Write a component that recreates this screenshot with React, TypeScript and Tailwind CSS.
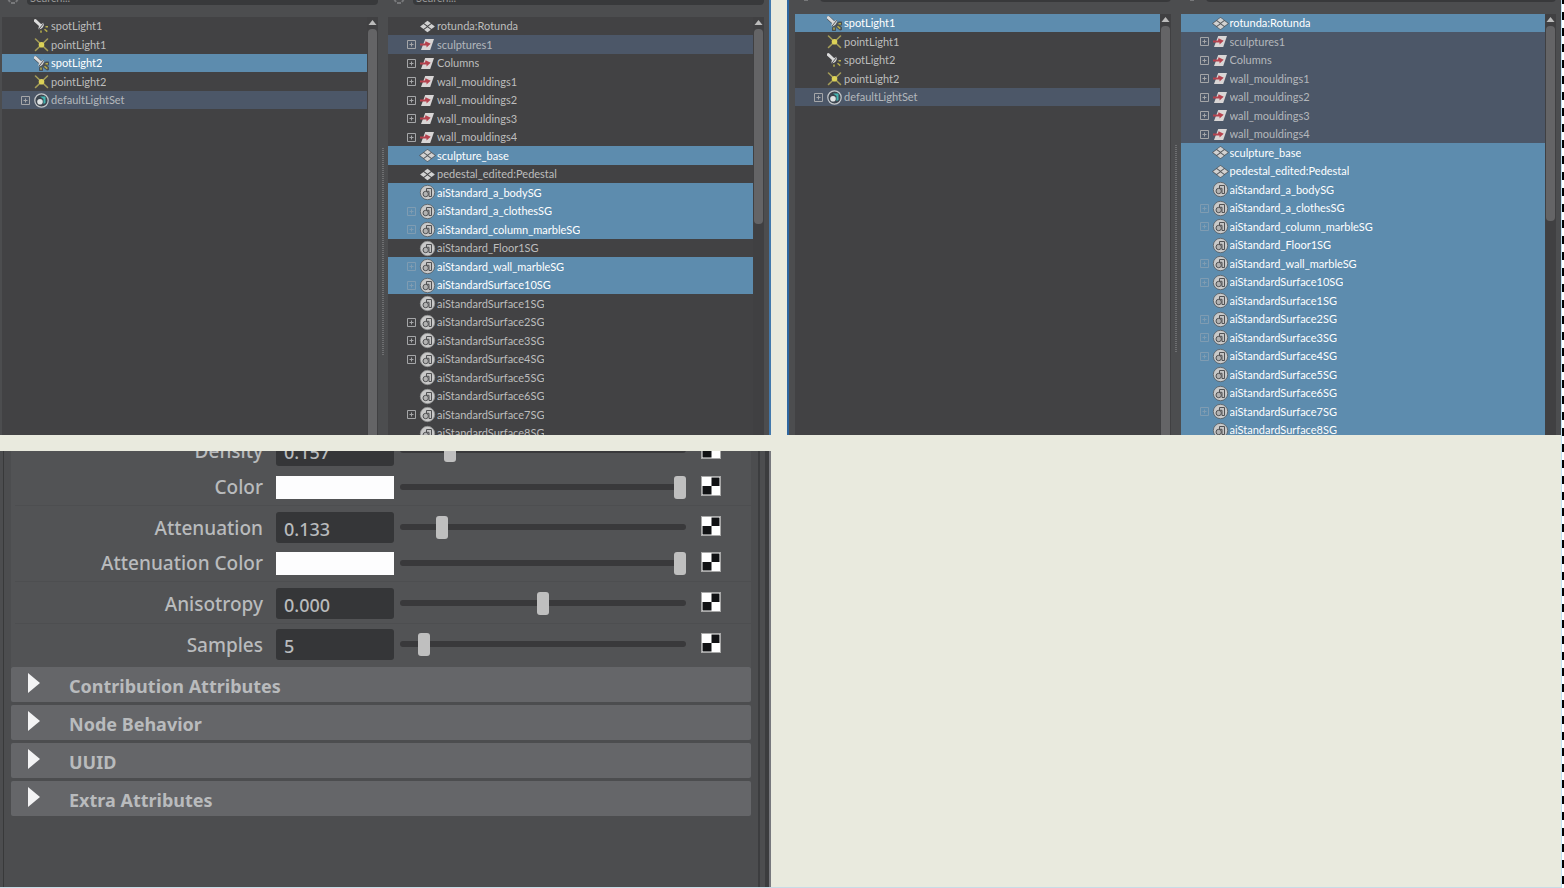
import { useState } from "react";
import clsx from "clsx";

type Kind = "spot" | "point" | "lightSet" | "mesh" | "group" | "shading";
type Mark = "none" | "selected" | "related";

type TreeItem = {
  name: string;
  kind: Kind;
  expandable?: boolean;
};

const LIGHTS: TreeItem[] = [
  { name: "spotLight1", kind: "spot" },
  { name: "pointLight1", kind: "point" },
  { name: "spotLight2", kind: "spot" },
  { name: "pointLight2", kind: "point" },
  { name: "defaultLightSet", kind: "lightSet", expandable: true },
];

const OBJECTS: TreeItem[] = [
  { name: "rotunda:Rotunda", kind: "mesh" },
  { name: "sculptures1", kind: "group", expandable: true },
  { name: "Columns", kind: "group", expandable: true },
  { name: "wall_mouldings1", kind: "group", expandable: true },
  { name: "wall_mouldings2", kind: "group", expandable: true },
  { name: "wall_mouldings3", kind: "group", expandable: true },
  { name: "wall_mouldings4", kind: "group", expandable: true },
  { name: "sculpture_base", kind: "mesh" },
  { name: "pedestal_edited:Pedestal", kind: "mesh" },
  { name: "aiStandard_a_bodySG", kind: "shading" },
  { name: "aiStandard_a_clothesSG", kind: "shading", expandable: true },
  { name: "aiStandard_column_marbleSG", kind: "shading", expandable: true },
  { name: "aiStandard_Floor1SG", kind: "shading" },
  { name: "aiStandard_wall_marbleSG", kind: "shading", expandable: true },
  { name: "aiStandardSurface10SG", kind: "shading", expandable: true },
  { name: "aiStandardSurface1SG", kind: "shading" },
  { name: "aiStandardSurface2SG", kind: "shading", expandable: true },
  { name: "aiStandardSurface3SG", kind: "shading", expandable: true },
  { name: "aiStandardSurface4SG", kind: "shading", expandable: true },
  { name: "aiStandardSurface5SG", kind: "shading" },
  { name: "aiStandardSurface6SG", kind: "shading" },
  { name: "aiStandardSurface7SG", kind: "shading", expandable: true },
  { name: "aiStandardSurface8SG", kind: "shading" },
];

const GROUPS = OBJECTS.filter((o) => o.kind === "group").map((o) => o.name);
const NOT_GROUPS = OBJECTS.filter((o) => o.kind !== "group").map((o) => o.name);

function NodeIcon({ kind, selected }: { kind: Kind; selected: boolean }) {
  const outline = selected ? "#4b5054" : "none";

  if (kind === "spot") {
    return (
      <svg viewBox="0 0 15 15" className="size-[15px] shrink-0">
        <g stroke={outline} strokeWidth="4" strokeLinecap="round" fill="none">
          <path d="M1.5 2 6 6M8.5 8.5h1M12 7.5h2M11 10.5l2.5 2M7 12v2" />
        </g>
        <path d="M1.3 1.6 6 6" stroke="#dcdcdc" strokeWidth="3" strokeLinecap="round" />
        <path d="M9.8 3.8a5 5 0 0 1-5.2 6.4c-.4-2 .3-3.5 1.6-4.8z" fill="#d6d6d6" />
        <path d="M9.8 4.2 5 10.2" stroke="#55565a" strokeWidth="1" />
        <path d="M11.5 7.7H14M10.5 10.2l2.8 2.4M7 11.5v2.2" stroke="#b5ad4c" strokeWidth="1.5" />
      </svg>
    );
  }

  if (kind === "point") {
    return (
      <svg viewBox="0 0 15 15" className="size-[15px] shrink-0">
        <path d="M1.5 2l12 11.5M13.5 2l-12 11.5" stroke="#a59d58" strokeWidth="1.6" strokeLinecap="round" />
        <circle cx="7.5" cy="7.7" r="2.8" fill="#dcd257" />
      </svg>
    );
  }

  if (kind === "lightSet") {
    return (
      <svg viewBox="0 0 15 15" className="size-[15px] shrink-0">
        <circle cx="7.5" cy="7.5" r="6.7" fill="#3d4650" stroke="#c6c9cc" strokeWidth="1.2" />
        <path d="M6 3.5h5.500v6.500l-2 1V6z" fill="#42b3b0" />
        <circle cx="6" cy="8.8" r="2.8" fill="#dfe3e4" />
      </svg>
    );
  }

  if (kind === "mesh") {
    return (
      <svg viewBox="0 0 15 15" className="size-[15px] shrink-0 overflow-visible">
        <path d="M7.5 1 16 7.500l-8.500 6.500L-1 7.500z" fill={selected ? "#55595d" : "none"} />
        <g fill="#d2d2d2">
          <path d="m7.5 1.8 3.400 2.500-3.400 2.500-3.400-2.500z" />
          <path d="m3.500 5 3.400 2.500-3.400 2.500L.1 7.500z" />
          <path d="m11.500 5 3.400 2.500-3.400 2.500-3.400-2.500z" />
          <path d="m7.500 8.200 3.400 2.500-3.400 2.500-3.400-2.500z" />
        </g>
      </svg>
    );
  }

  if (kind === "group") {
    return (
      <svg viewBox="0 0 15 15" className="size-[15px] shrink-0">
        <path d="M5.2 2h8.800l-3.800 11H1z" fill="#d9d6d6" />
        <path d="M0 6.500h5L5.500 4.200l5.200 2.600-4.200 3.600V8.600H0z" fill="#b5424e" />
      </svg>
    );
  }

  return (
    <svg viewBox="0 0 15 15" className="size-[15px] shrink-0 overflow-visible">
      <circle cx="7.5" cy="7.5" r="7.200" fill="#c9c9c9" stroke={selected ? "#55595d" : "#8f9090"} strokeWidth=".8" />
      <path d="M6.500 3.500h5v8H9V6.300H6.500z" fill="#c4c4c4" stroke="#505153" strokeWidth="1" />
      <circle cx="5.700" cy="9" r="2.700" fill="#b2b2b2" stroke="#505153" strokeWidth="1" />
    </svg>
  );
}

function TreeRow({ item, mark, onSelect }: { item: TreeItem; mark: Mark; onSelect: () => void }) {
  return (
    <li
      className={clsx(
        "flex items-center pl-[19px] odd:h-[18px] even:h-[19px]",
        mark === "selected" && "bg-[#5d8cae] text-white",
        mark === "related" && "bg-[#4c5768] text-[#b4b7bc]",
        mark === "none" && "text-[#bdbdbd]",
      )}
    >
      <span className="mr-1 flex w-[9px] shrink-0">
        {item.expandable && (
          <button
            aria-label={`Expand ${item.name}`}
            className={clsx("size-[9px]", mark === "selected" ? "text-[#7f9cb2]" : "text-[#a5a6a8]")}
          >
            <svg viewBox="0 0 9 9" className="size-[9px]" fill="none" stroke="currentColor">
              <path d="M.5.5h8v8h-8zM2.500 4.500h4M4.500 2.500v4" />
            </svg>
          </button>
        )}
      </span>
      <button onClick={onSelect} className="flex min-w-0 flex-1 items-center gap-[2px] text-left">
        <NodeIcon kind={item.kind} selected={mark === "selected"} />
        <span className="truncate">{item.name}</span>
      </button>
    </li>
  );
}

type ColumnProps = {
  label: string;
  items: TreeItem[];
  initial: string[];
  related: string[];
  shifted?: boolean;
  long?: boolean;
};

function TreeColumn({ label, items, initial, related, shifted, long }: ColumnProps) {
  const [selected, setSelected] = useState(initial);

  function markOf(name: string): Mark {
    if (selected.includes(name)) return "selected";
    return related.includes(name) ? "related" : "none";
  }

  return (
    <div className="flex min-w-0 flex-1 flex-col">
      <div
        className={clsx(
          "mb-3 flex shrink-0 items-end gap-[7px] overflow-hidden pl-1",
          shifted ? "h-[2px]" : "h-[5px]",
        )}
      >
        <svg viewBox="0 0 14 14" className="size-[14px] shrink-0" fill="none" stroke="#77787a" strokeWidth="2">
          <path d="M4 3 1.500 7 4 11M10 3l2.500 4-2.500 4M5 12h4M5 8h4" />
        </svg>
        <input
          aria-label={label}
          placeholder="Search..."
          className="h-[18px] min-w-0 flex-1 rounded-sm bg-[#38393b] px-[3px] pt-1 outline-none placeholder:text-[#9a9a9a]"
        />
      </div>
      <div className="flex min-h-0 flex-1 bg-[#424244]">
        <ul className="min-w-0 flex-1 overflow-hidden">
          {items.map((item) => (
            <TreeRow
              key={item.name}
              item={item}
              mark={markOf(item.name)}
              onSelect={() => setSelected([item.name])}
            />
          ))}
        </ul>
        <div className="flex w-[11px] shrink-0 flex-col items-center bg-[#404042]">
          <svg viewBox="0 0 9 12" className="h-3 w-[9px] shrink-0">
            <path d="M4.500 3 8.500 8h-8z" fill="#bcbcbc" />
          </svg>
          <div className={clsx("w-[9px] bg-[#646466]", long ? "flex-1 rounded-t" : "h-[195px] rounded")} />
        </div>
      </div>
    </div>
  );
}

type LinkerProps = {
  lights: string[];
  objects: string[];
  relatedObjects: string[];
  shifted?: boolean;
};

function LightLinker({ lights, objects, relatedObjects, shifted }: LinkerProps) {
  return (
    <section
      className={clsx(
        "flex h-[435px] min-w-0 overflow-hidden bg-[#4c4d4f] pr-[5px] font-['Lato','Noto_Sans',sans-serif] text-[11px] leading-[18px]",
        shifted
          ? "border-l-2 border-l-[#2d66a0] pl-[6px]"
          : "border-r-2 border-r-[#4379ac] pl-[2px]",
      )}
    >
      <TreeColumn
        label="Search light sources"
        items={LIGHTS}
        initial={lights}
        related={["defaultLightSet"]}
        shifted={shifted}
        long
      />
      <div
        className={clsx(
          "flex w-[10px] shrink-0 justify-center",
          shifted ? "pt-[145px]" : "pt-[148px]",
        )}
      >
        <div className="h-[207px] w-[2px] border-x border-dotted border-[#6e6f71]" />
      </div>
      <TreeColumn
        label="Search illuminated objects"
        items={OBJECTS}
        initial={objects}
        related={relatedObjects}
        shifted={shifted}
      />
    </section>
  );
}

type Attribute = {
  id: string;
  label: string;
  text?: string;
  value: number;
  min?: number;
  max?: number;
};

const RANGE_STYLE =
  "h-[23px] min-w-0 flex-1 appearance-none bg-transparent [&::-webkit-slider-runnable-track]:h-[6px] [&::-webkit-slider-runnable-track]:rounded-full [&::-webkit-slider-runnable-track]:bg-[#39393b] [&::-webkit-slider-thumb]:-mt-2 [&::-webkit-slider-thumb]:h-[23px] [&::-webkit-slider-thumb]:w-3 [&::-webkit-slider-thumb]:appearance-none [&::-webkit-slider-thumb]:rounded-[3px] [&::-webkit-slider-thumb]:bg-[#bfbfbf]";

function AttributeRow({ id, label, text, value, min = 0, max = 1 }: Attribute) {
  return (
    <div className="flex items-center pr-[30px]">
      <label htmlFor={id} className="w-[248px] shrink-0 text-right text-[19px] font-medium">
        {label}
      </label>
      {text ? (
        <input
          id={id}
          defaultValue={text}
          className="ml-[13px] h-[31px] w-[118px] shrink-0 rounded-[3px] bg-[#353638] px-2 pt-[2px] font-medium outline-none"
        />
      ) : (
        <button id={id} className="ml-[13px] h-[23px] w-[118px] shrink-0 bg-[#fdfdfe]" />
      )}
      <input
        type="range"
        aria-label={`${label} slider`}
        min={min}
        max={max}
        step="any"
        defaultValue={value}
        className={clsx("ml-[6px] mr-[15px]", text && "mb-[2px]", RANGE_STYLE)}
      />
      <button aria-label={`Map ${label}`} className="mb-[3px] size-5 shrink-0">
        <svg viewBox="0 0 20 20" className="size-5">
          <path d="M0 0h20v20H0z" fill="#a8a8a8" />
          <path d="M1 1h18v18H1z" fill="#fff" />
          <path d="M10.500 1.500h8v8.500h-8zM1.500 10h9v8.500h-9z" fill="#111214" />
        </svg>
      </button>
    </div>
  );
}

function SectionHeader({ title }: { title: string }) {
  return (
    <button className="flex h-[35px] w-full items-center gap-[29px] rounded-[2px] bg-[#656669] pl-[17px] text-left font-bold">
      <svg viewBox="0 0 12 20" className="mb-1 h-5 w-3 shrink-0">
        <path d="M0 0l12 10L0 20z" fill="#f3f3f4" />
      </svg>
      <span className="pt-[2px]">{title}</span>
    </button>
  );
}

function AttributeEditor() {
  return (
    <section className="flex min-h-[436px] min-w-0 overflow-hidden bg-[#4c4d4f] font-['Noto_Sans','Open_Sans',sans-serif] text-[18px] leading-6 text-[#b9bbbd]">
      <div className="w-1 shrink-0 border-r border-[#38393a]" />
      <div className="min-w-0 flex-1 px-[7px]">
        <div className="-mt-4 bg-[#525355] pl-1">
          <div className="flex flex-col gap-[9px] pb-[6px]">
            <AttributeRow id="density" label="Density" text="0.157" value={0.16} />
            <AttributeRow id="color" label="Color" value={1} />
          </div>
          <div className="flex flex-col gap-2 border-t border-[#4d4e50] py-[6px]">
            <AttributeRow id="attenuation" label="Attenuation" text="0.133" value={0.133} />
            <AttributeRow id="attenuationColor" label="Attenuation Color" value={1} />
          </div>
          <div className="border-t border-[#4d4e50] pt-[6px] pb-1">
            <AttributeRow id="anisotropy" label="Anisotropy" text="0.000" value={0} min={-1} />
          </div>
          <div className="border-t border-[#4d4e50] pt-[5px] pb-[7px]">
            <AttributeRow id="samples" label="Samples" text="5" value={5} max={75} />
          </div>
        </div>
        <div className="flex flex-col gap-[3px]">
          <SectionHeader title="Contribution Attributes" />
          <SectionHeader title="Node Behavior" />
          <SectionHeader title="UUID" />
          <SectionHeader title="Extra Attributes" />
        </div>
      </div>
      <div className="w-[7px] shrink-0 border-l-2 border-[#3c3d3f]" />
      <div className="w-[6px] shrink-0 border-r-2 border-[#77787d] bg-[#3b3c3e]" />
    </section>
  );
}

export default function App() {
  return (
    <div className="flex min-h-screen bg-[#e9eade] font-['Open_Sans','Noto_Sans',sans-serif]">
      <main className="grid min-w-0 flex-1 grid-cols-[771fr_774fr] grid-rows-[auto_1fr] gap-4 border-b border-[#c8dbe6]">
        <LightLinker
          lights={["spotLight2"]}
          objects={[
            "sculpture_base",
            "aiStandard_a_bodySG",
            "aiStandard_a_clothesSG",
            "aiStandard_column_marbleSG",
            "aiStandard_wall_marbleSG",
            "aiStandardSurface10SG",
          ]}
          relatedObjects={["sculptures1"]}
        />
        <LightLinker lights={["spotLight1"]} objects={NOT_GROUPS} relatedObjects={GROUPS} shifted />
        <AttributeEditor />
      </main>
      <div className="w-[3px] shrink-0 border-l border-[#bfe0f5] bg-[repeating-linear-gradient(to_bottom,#000_0,#000_4px,#fff_4px,#fff_12px,#000_12px,#000_16px)]" />
    </div>
  );
}
